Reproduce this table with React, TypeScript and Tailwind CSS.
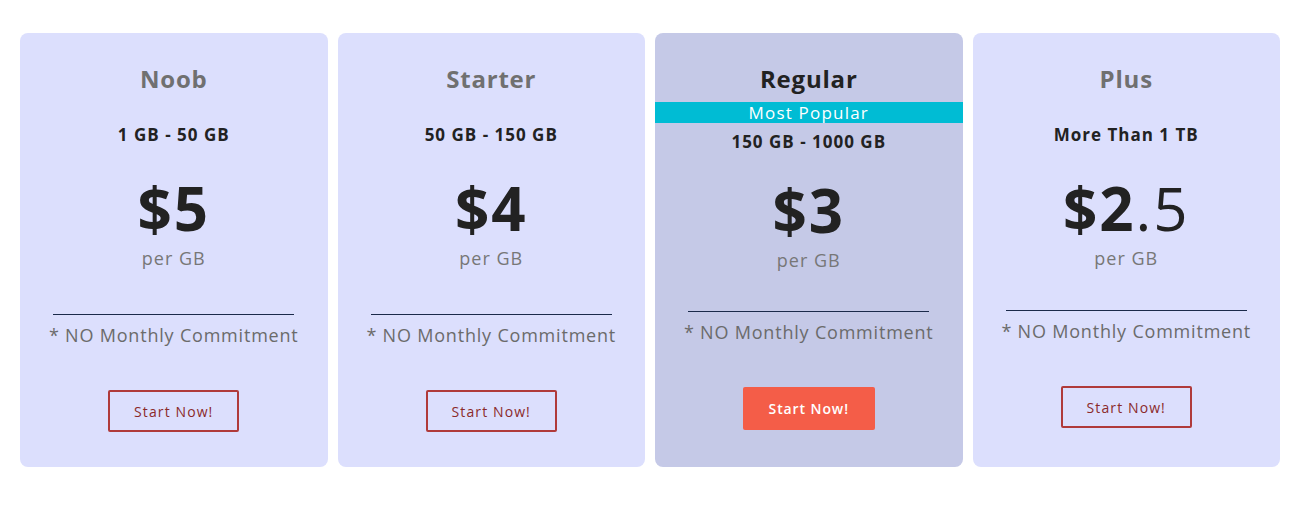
type Plan = {
  name: string;
  range: string;
  price: string;
  cents?: string;
  featured?: boolean;
  dividerGap: string;
};

const plans: Plan[] = [
  { name: "Noob", range: "1 GB - 50 GB", price: "$5", dividerGap: "mt-[45px]" },
  { name: "Starter", range: "50 GB - 150 GB", price: "$4", dividerGap: "mt-[45px]" },
  { name: "Regular", range: "150 GB - 1000 GB", price: "$3", featured: true, dividerGap: "mt-[40px]" },
  { name: "Plus", range: "More Than 1 TB", price: "$2", cents: ".5", dividerGap: "mt-[41px]" },
];

function PlanCard({ plan }: { plan: Plan }) {
  const f = plan.featured;
  return (
    <div
      className={`flex h-[434px] flex-col items-center rounded-[8px] pt-[32px] ${
        f ? "bg-[#c5c9e7]" : "bg-[#dcdffd]"
      }`}
    >
      <h3
        className={`text-[24px] leading-[28px] font-bold tracking-[0.8px] ${
          f ? "text-[#222222]" : "text-[#707070]"
        }`}
      >
        {plan.name}
      </h3>

      {f ? (
        <>
          <div className="mt-[9px] h-[21px] w-full bg-[#00bcd4] text-center text-[17px] leading-[21px] font-medium tracking-[1.2px] text-white">
            Most Popular
          </div>
          <div className="mt-[9px] text-[17px] leading-[20px] font-bold tracking-[1px] text-[#222222]">
            {plan.range}
          </div>
        </>
      ) : (
        <div className="mt-[32px] text-[17px] leading-[20px] font-bold tracking-[1px] text-[#222222]">
          {plan.range}
        </div>
      )}

      <div
        className={`${f ? "mt-[28px]" : "mt-[33px]"} text-[60px] leading-[60px] font-bold tracking-[2px] text-[#222222]`}
      >
        {plan.price}
        {plan.cents && <span className="font-normal">{plan.cents}</span>}
      </div>
      <div className="mt-[9px] text-[18px] leading-[22px] tracking-[1px] text-[#777777]">per GB</div>

      <div className={`${plan.dividerGap} h-px w-[241px] bg-[#1b2a4a]`} />
      <div className="mt-[8px] text-[18px] leading-[24px] tracking-[0.8px] text-[#6b6b6b]">
        * NO Monthly Commitment
      </div>

      {f ? (
        <button className="mt-[43px] h-[43px] w-[132px] rounded-[2px] bg-[#f45d48] text-[14px] font-semibold tracking-[0.9px] text-white">
          Start Now!
        </button>
      ) : (
        <button className="mt-[43px] h-[42px] w-[131px] rounded-[2px] border-2 border-[#b03a3a] text-[14px] tracking-[1.1px] text-[#8b2a2a]">
          Start Now!
        </button>
      )}
    </div>
  );
}

export default function App() {
  return (
    <div
      className="h-[507px] w-[1313px] bg-white pt-[33px] pl-[20px]"
      style={{ fontFamily: '"Open Sans", "Noto Sans", sans-serif' }}
    >
      <div className="grid w-[1260px] grid-cols-4 gap-[10px]">
        {plans.map((p) => (
          <PlanCard key={p.name} plan={p} />
        ))}
      </div>
    </div>
  );
}
